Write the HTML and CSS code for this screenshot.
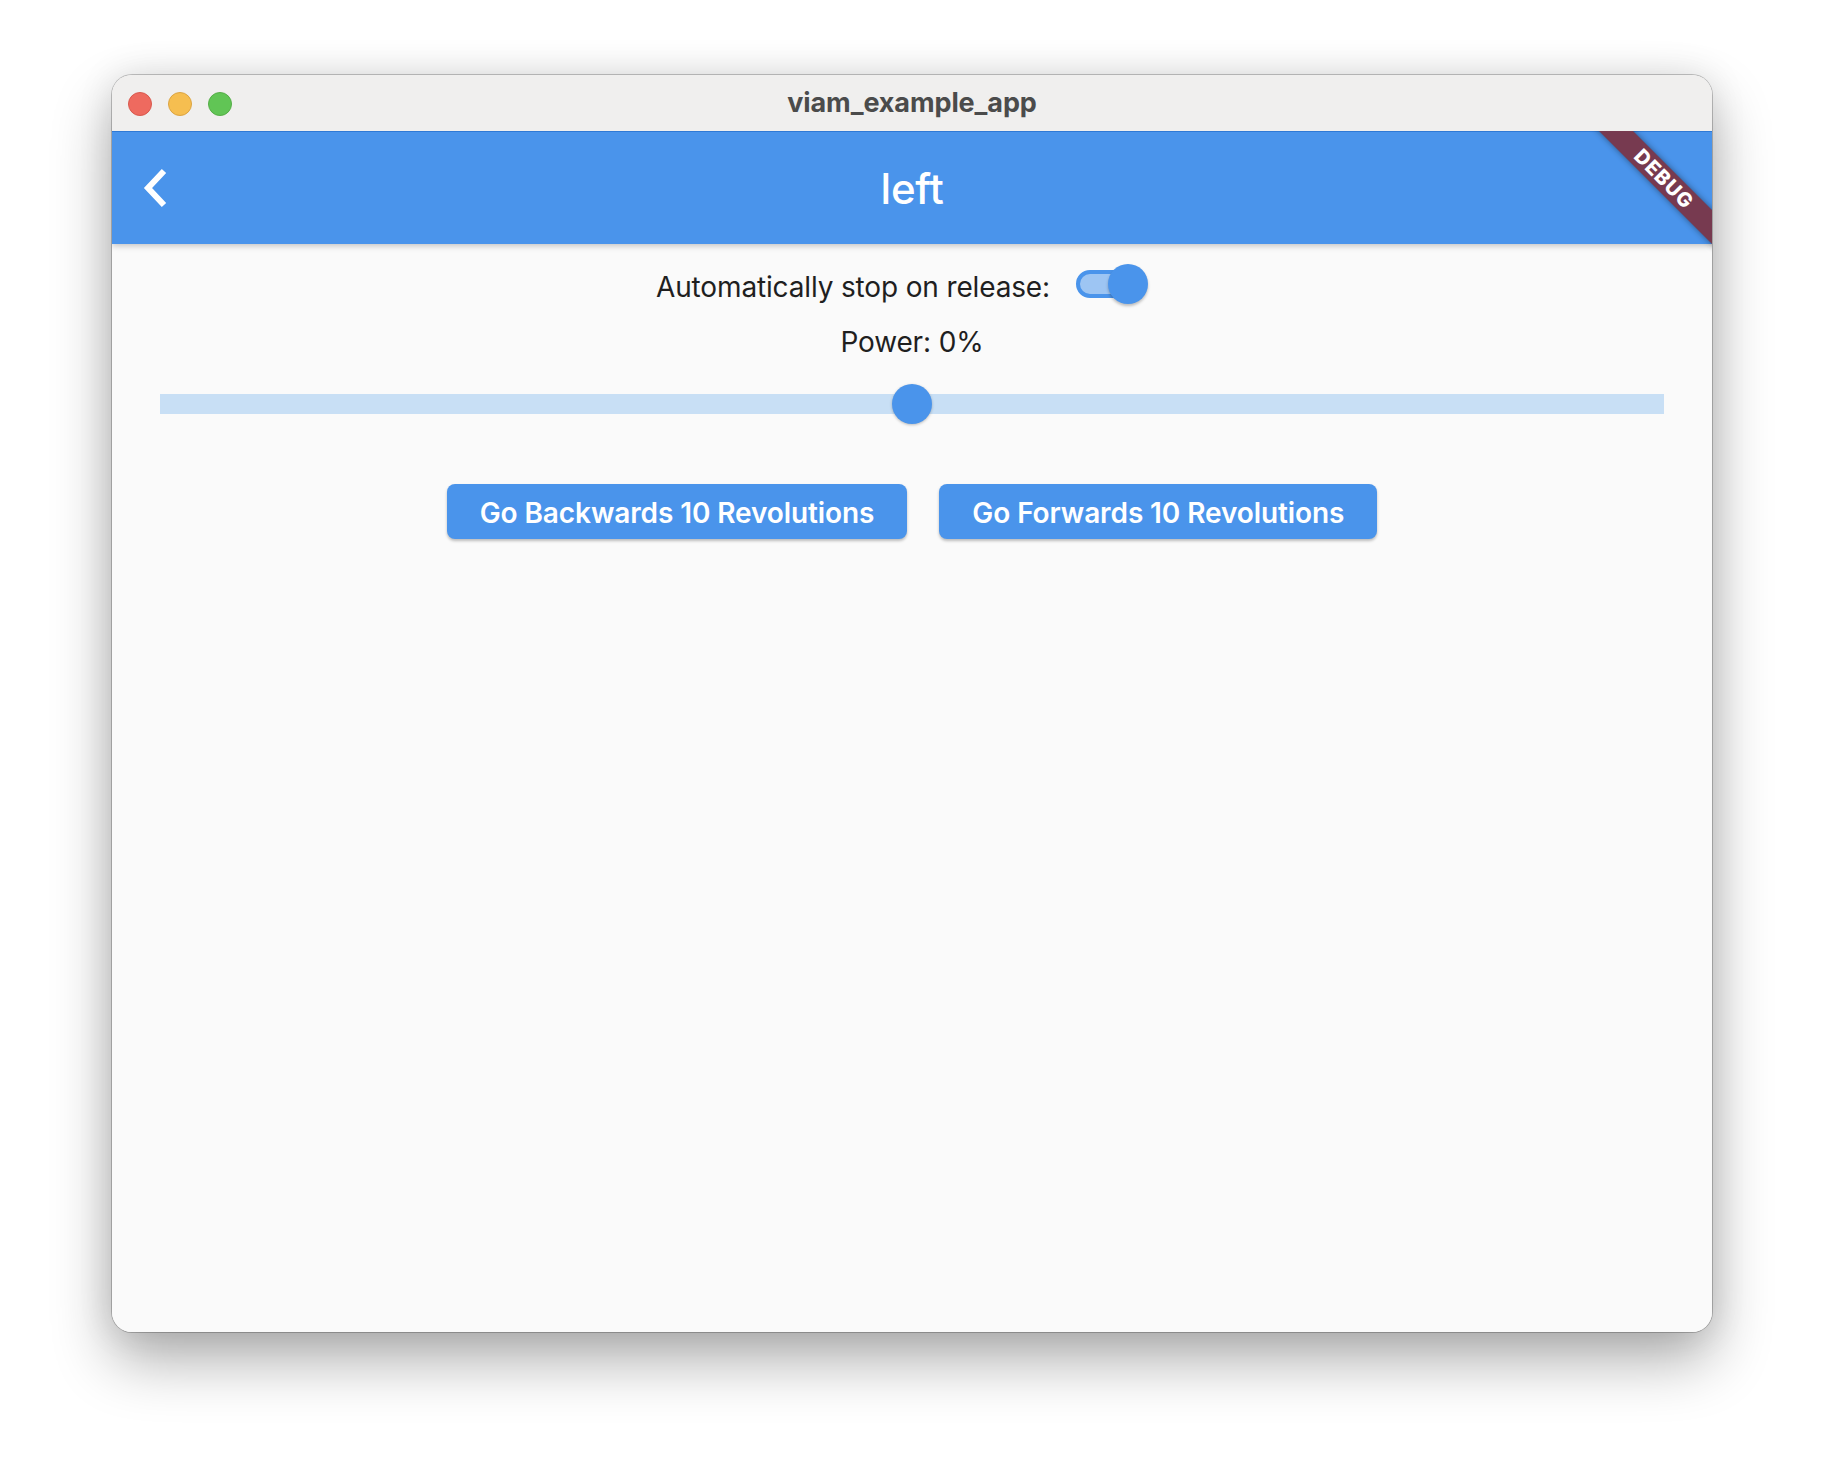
FILE: index.html
```html
<!DOCTYPE html>
<html lang="en">
<head>
<meta charset="utf-8">
<title>viam_example_app</title>
<link rel="stylesheet" href="styles.css">
</head>
<body>
<div class="window">
  <div class="titlebar">
    <div class="lights">
      <span class="light red"></span>
      <span class="light yellow"></span>
      <span class="light green"></span>
    </div>
    <div class="wtitle">viam_example_app</div>
    <div></div>
  </div>
  <div class="app">
    <header class="appbar">
      <div class="lead">
        <svg class="back" width="32" height="46" viewBox="0 0 32 46" aria-hidden="true">
          <path d="M24 6 L8 23 L24 40" fill="none" stroke="#ffffff" stroke-width="6" stroke-linejoin="miter"/>
        </svg>
      </div>
      <h1 class="title">left</h1>
      <div></div>
    </header>
    <main class="content">
      <div class="switch-row">
        <span class="label">Automatically stop on release:</span>
        <div class="switch">
          <span class="track"></span>
          <span class="thumb"></span>
        </div>
      </div>
      <div class="power">Power: 0%</div>
      <div class="slider">
        <div class="slider-track"></div>
        <div class="slider-thumb"></div>
      </div>
      <div class="buttons">
        <button class="btn">Go Backwards 10 Revolutions</button>
        <button class="btn">Go Forwards 10 Revolutions</button>
      </div>
    </main>
    <div class="debug-banner">DEBUG</div>
  </div>
</div>
</body>
</html>
```
FILE: styles.css
```css
html, body {
  margin: 0;
  padding: 0;
  background: #ffffff;
}
body {
  width: 1824px;
  height: 1480px;
  overflow: hidden;
  padding-top: 75px;
  padding-left: 112px;
  box-sizing: border-box;
  font-family: Inter, "Liberation Sans", sans-serif;
}
.window {
  width: 1600px;
  height: 1257px;
  border-radius: 20px;
  overflow: hidden;
  display: flex;
  flex-direction: column;
  box-shadow: 0 0 0 1px rgba(0,0,0,0.22), 0 28px 60px rgba(0,0,0,0.32), 0 0 36px rgba(0,0,0,0.10);
  background: #fafafa;
}
.titlebar {
  height: 56px;
  background: #f0efee;
  display: grid;
  grid-template-columns: 1fr auto 1fr;
  align-items: center;
  flex: none;
}
.lights {
  display: flex;
  gap: 16px;
  padding-left: 16px;
  padding-top: 1px;
}
.light {
  width: 24px;
  height: 24px;
  border-radius: 50%;
  box-sizing: border-box;
}
.red { background: #ee6a5f; border: 1px solid #d8594e; }
.yellow { background: #f6be50; border: 1px solid #dba443; }
.green { background: #61c555; border: 1px solid #55ad47; }
.wtitle {
  font-size: 27px;
  font-weight: 700;
  color: #4b4b4b;
  letter-spacing: -0.1px;
  margin-top: -2px;
}
.app {
  flex: 1;
  position: relative;
  overflow: hidden;
  display: flex;
  flex-direction: column;
}
.appbar {
  height: 112px;
  border-top: 1px solid #2f79d5;
  background: #4a94eb;
  display: grid;
  grid-template-columns: 1fr auto 1fr;
  align-items: center;
  box-shadow: 0 2px 6px rgba(0,0,0,0.22);
  position: relative;
  z-index: 1;
  flex: none;
}
.lead {
  display: flex;
  align-items: center;
  padding-left: 28px;
}
.back { display: block; }
.title {
  margin: 0;
  font-size: 42px;
  font-weight: 500;
  color: #ffffff;
  letter-spacing: -0.3px;
}
.content {
  flex: 1;
  background: #fafafa;
  display: flex;
  flex-direction: column;
  align-items: center;
  padding-top: 12px;
  color: #1f1f1f;
}
.switch-row {
  display: flex;
  align-items: center;
  height: 56px;
}
.label {
  font-size: 28px;
  letter-spacing: -0.15px;
  margin-top: 5px;
}
.switch {
  width: 118px;
  height: 56px;
  position: relative;
}
.track {
  position: absolute;
  left: 26px;
  top: 14px;
  width: 66px;
  height: 28px;
  box-sizing: border-box;
  border-radius: 14px;
  border: 4px solid #4a94eb;
  background: #9dc5f3;
}
.thumb {
  position: absolute;
  left: 58px;
  top: 8px;
  width: 40px;
  height: 40px;
  border-radius: 50%;
  background: #4a94eb;
  box-shadow: 0 2px 3px rgba(0,0,0,0.25);
}
.power {
  margin-top: 10px;
  font-size: 28px;
  line-height: 40px;
  letter-spacing: -0.15px;
}
.slider {
  margin-top: 22px;
  align-self: stretch;
  margin-left: 48px;
  margin-right: 48px;
  height: 40px;
  position: relative;
  display: flex;
  align-items: center;
  justify-content: center;
}
.slider-track {
  position: absolute;
  left: 0;
  right: 0;
  top: 10px;
  height: 20px;
  background: #c8dff5;
}
.slider-thumb {
  position: relative;
  width: 40px;
  height: 40px;
  border-radius: 50%;
  background: #4a94eb;
  box-shadow: 0 1px 3px rgba(0,0,0,0.25);
}
.buttons {
  margin-top: 60px;
  display: flex;
  gap: 32px;
}
.btn {
  height: 55px;
  padding: 3px 33px 0;
  border: none;
  border-radius: 8px;
  background: #4a94eb;
  color: #ffffff;
  font-family: Inter, "Liberation Sans", sans-serif;
  font-size: 28px;
  font-weight: 600;
  letter-spacing: -0.1px;
  box-shadow: 0 2px 3px rgba(0,0,0,0.25);
}
.debug-banner {
  position: absolute;
  top: 36px;
  right: -52px;
  width: 200px;
  height: 24px;
  line-height: 24px;
  text-align: center;
  transform: rotate(45deg);
  background: #773a50;
  color: #ffffff;
  font-size: 20px;
  font-weight: 800;
  letter-spacing: 1px;
  box-shadow: 0 0 6px rgba(0,0,0,0.45);
  z-index: 2;
}
```
